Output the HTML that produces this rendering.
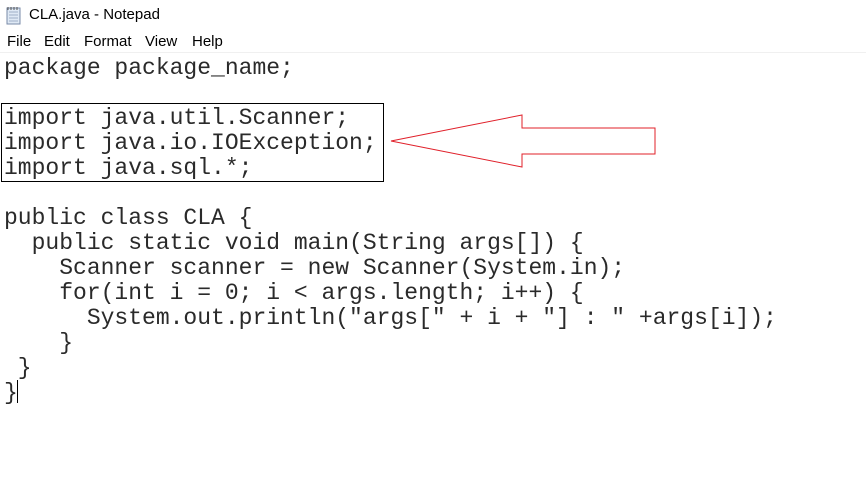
<!DOCTYPE html>
<html><head><style>
body{margin:0;width:866px;height:483px;background:#fff;overflow:hidden;position:relative;font-family:"Liberation Sans",sans-serif}
.title{position:absolute;left:29px;top:6px;font-size:15px;color:#000}
.menu span{position:absolute;top:33px;font-size:15px}
.sep{position:absolute;left:0;top:52px;width:866px;height:1px;background:#f0f0f0}
pre{position:absolute;left:4px;top:56px;margin:0;font-family:"Liberation Mono",monospace;font-size:23px;line-height:25px;color:#2a2a2a}
.box{position:absolute;left:1px;top:103px;width:381px;height:77px;border:1px solid #000}
.cur{position:absolute;left:17px;top:380px;width:1px;height:23px;background:#000}
</style></head><body>
<svg style="position:absolute;left:5px;top:5px" width="18" height="20" viewBox="0 0 18 20"><rect x="2" y="3" width="13" height="16" fill="#dfe9f5" stroke="#7a8ba8"/><path d="M4 7h9M4 10h9M4 13h9M4 16h9" stroke="#9fb0c8"/><path d="M3 2v3M6 2v3M9 2v3M12 2v3" stroke="#555"/></svg>
<div class="title">CLA.java - Notepad</div>
<div class="menu"><span style="left:7px">File</span><span style="left:44px">Edit</span><span style="left:84px">Format</span><span style="left:145px">View</span><span style="left:192px">Help</span></div>
<div class="sep"></div>
<div class="box"></div>
<pre>package package_name;

import java.util.Scanner;
import java.io.IOException;
import java.sql.*;

public class CLA {
  public static void main(String args[]) {
    Scanner scanner = new Scanner(System.in);
    for(int i = 0; i &lt; args.length; i++) {
      System.out.println("args[" + i + "] : " +args[i]);
    }
 }
}</pre>
<div class="cur"></div>
<svg style="position:absolute;left:0;top:0" width="866" height="483"><polygon points="391,141 522,115 522,128 655,128 655,154 522,154 522,167" fill="none" stroke="#e0202a" stroke-width="1"/></svg>
</body></html>
